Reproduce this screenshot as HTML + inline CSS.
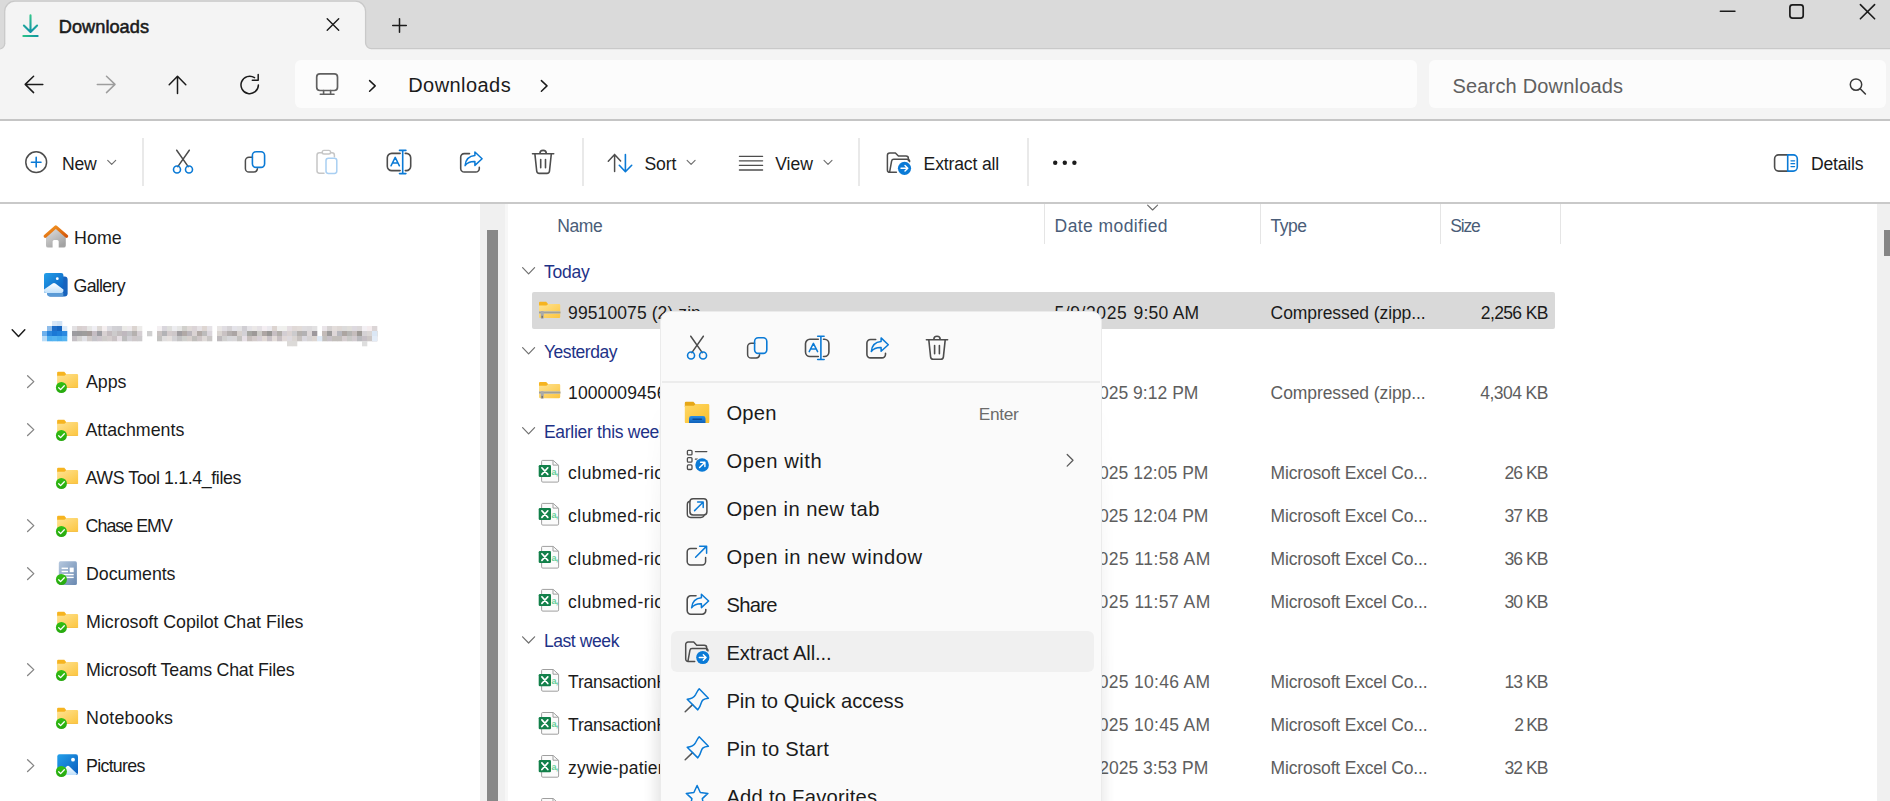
<!DOCTYPE html>
<html lang="en"><head><meta charset="utf-8"><title>Downloads - File Explorer</title>
<style>
html,body{margin:0;padding:0;}
body{width:1890px;height:801px;overflow:hidden;position:relative;background:#fff;font-family:"Liberation Sans",sans-serif;}
.a{position:absolute;}
.t{position:absolute;white-space:nowrap;font-family:"Liberation Sans",sans-serif;}
svg{position:absolute;overflow:visible;}
.ov{left:0;top:0;pointer-events:none;}
.s{fill:none;stroke-linecap:round;stroke-linejoin:round;}
</style></head><body>
<div class="a" style="left:0;top:0;width:1890px;height:48px;background:#dadada"></div>
<div class="a" style="left:0;top:48px;width:1890px;height:72px;background:#f4f4f4"></div>
<svg class="ov" width="1890" height="60" viewBox="0 0 1890 60"><path d="M-2 48.6A5.2 5.2 0 0 0 4.7 43.4V11.4A10.2 10.2 0 0 1 14.9 1.2H355.4A10.2 10.2 0 0 1 365.6 11.4V42.8A5.8 5.8 0 0 0 371.4 48.6H1892V56H-2Z" fill="#f4f4f4"/><path d="M-2 48.6A5.2 5.2 0 0 0 4.7 43.4V11.4A10.2 10.2 0 0 1 14.9 1.2H355.4A10.2 10.2 0 0 1 365.6 11.4V42.8A5.8 5.8 0 0 0 371.4 48.6H1892" fill="none" stroke="#c9c9c9" stroke-width="1.3"/></svg>
<div class="a" style="left:0;top:119px;width:1890px;height:2px;background:#c5c5c5"></div>
<div class="a" style="left:295.2px;top:60.2px;width:1121.6px;height:48.3px;background:#fcfcfc;border-radius:6px"></div>
<div class="a" style="left:1429.2px;top:60.2px;width:456.5px;height:48.3px;background:#fcfcfc;border-radius:6px"></div>
<div class="a" style="left:0;top:121px;width:1890px;height:81px;background:#fff"></div>
<div class="a" style="left:0;top:202px;width:1890px;height:2px;background:#c9c9c9"></div>
<div class="a" style="left:142px;top:138px;width:1.6px;height:48px;background:#e9e9e9"></div>
<div class="a" style="left:582px;top:138px;width:1.6px;height:48px;background:#e9e9e9"></div>
<div class="a" style="left:858px;top:138px;width:1.6px;height:48px;background:#e9e9e9"></div>
<div class="a" style="left:1027px;top:138px;width:1.6px;height:48px;background:#e9e9e9"></div>
<div class="a" style="left:480px;top:204px;width:25px;height:597px;background:#f0f0f0"></div>
<div class="a" style="left:487.1px;top:230px;width:11px;height:571px;background:#888"></div>
<div class="a" style="left:505px;top:204px;width:3px;height:597px;background:#f7f7f7"></div>
<div class="a" style="left:1877.2px;top:204px;width:13px;height:597px;background:#f0f0f0"></div>
<div class="a" style="left:1884px;top:230px;width:6px;height:26px;background:#858585"></div>
<div class="a" style="left:1044px;top:204px;width:1px;height:40px;background:#e5e5e5"></div>
<div class="a" style="left:1260px;top:204px;width:1px;height:40px;background:#e5e5e5"></div>
<div class="a" style="left:1440px;top:204px;width:1px;height:40px;background:#e5e5e5"></div>
<div class="a" style="left:1560px;top:204px;width:1px;height:40px;background:#e5e5e5"></div>
<div class="a" style="left:532px;top:292px;width:1023px;height:36.8px;background:#d9d9d9;border-radius:2px"></div>
<svg class="ov" width="1890" height="801" viewBox="0 0 1890 801"><defs><linearGradient id="dl2" x1="0" y1="0" x2="1" y2="0"><stop offset="0" stop-color="#2cc587"/><stop offset="1" stop-color="#0f93a2"/></linearGradient><linearGradient id="dl" gradientUnits="userSpaceOnUse" x1="0" y1="14" x2="0" y2="33"><stop offset="0" stop-color="#35c98a"/><stop offset="1" stop-color="#0f8fa8"/></linearGradient></defs>
<path class="s" d="M30.5 15.4V31.4M23.9 25.6L30.5 32L37.1 25.6" stroke="url(#dl)" stroke-width="2.1"/>
<rect x="22.3" y="35" width="16.4" height="2" rx="1" fill="url(#dl2)"/>
<path class="s" d="M327.2 18.8L338.7 30.3M338.7 18.8L327.2 30.3" stroke="#1b1b1b" stroke-width="1.4" fill="none" />
<path class="s" d="M392.7 25.5H406.3M399.5 18.7V32.3" stroke="#1b1b1b" stroke-width="1.5" fill="none" />
<path class="s" d="M1720.3 11.2H1735" stroke="#1b1b1b" stroke-width="1.4" fill="none" />
<rect x="1789.9" y="4.9" width="13.3" height="13.3" rx="2.6" fill="none" stroke="#1b1b1b" stroke-width="1.7"/>
<path class="s" d="M1860.4 4.6L1874.6 18.8M1874.6 4.6L1860.4 18.8" stroke="#1b1b1b" stroke-width="1.6" fill="none" />
<path class="s" d="M42.8 84.4H25.4M33.6 76.2L25.2 84.4L33.6 92.6" stroke="#1b1b1b" stroke-width="1.5" fill="none" />
<path class="s" d="M97.3 84.4H114.8M106.5 76.2L115 84.4L106.5 92.6" stroke="#9d9d9d" stroke-width="1.5" fill="none" />
<path class="s" d="M177.5 93.6V76.6M169.2 84.7L177.5 76.3L185.8 84.7" stroke="#1b1b1b" stroke-width="1.5" fill="none" />
<path class="s" d="M258.4 85A8.7 8.7 0 1 1 254.5 77.7" stroke="#1b1b1b" stroke-width="1.5" fill="none" />
<path class="s" d="M252.3 80.3H258.2V74.4" stroke="#1b1b1b" stroke-width="1.5" fill="none" />
<rect x="316.7" y="73.9" width="20.8" height="16.6" rx="3.2" fill="none" stroke="#606060" stroke-width="1.7"/>
<path class="s" d="M323.6 90.5V94M330.6 90.5V94M320.3 94.2H334" stroke="#606060" stroke-width="1.6" fill="none" />
<path class="s" d="M369.6 80.6L375.2 85.9L369.6 91.2" stroke="#1b1b1b" stroke-width="1.5" fill="none" />
<path class="s" d="M541.4 80.6L547 85.9L541.4 91.2" stroke="#1b1b1b" stroke-width="1.5" fill="none" />
<circle cx="1856" cy="84.6" r="5.7" fill="none" stroke="#3a3a3a" stroke-width="1.5"/>
<path class="s" d="M1860.2 88.8L1865.4 94" stroke="#3a3a3a" stroke-width="1.6" fill="none" />
<circle cx="36.2" cy="162.2" r="10.4" fill="none" stroke="#4d4d4d" stroke-width="1.5"/>
<path class="s" d="M31.4 162.2H41M36.2 157.4V167" stroke="#0a7ad6" stroke-width="1.6" fill="none" />
<path class="s" d="M107.7 160.3L111.7 164.3L115.7 160.3" stroke="#6c6c6c" stroke-width="1.1" fill="none" />
<path class="s" d="M687.1 160.3L691.1 164.3L695.1 160.3" stroke="#6c6c6c" stroke-width="1.1" fill="none" />
<path class="s" d="M824 160.3L828 164.3L832 160.3" stroke="#6c6c6c" stroke-width="1.1" fill="none" />
<path class="s" d="M176.7 150.2L188.2 166.6M189.3 150.2L177.8 166.6" stroke="#4d4d4d" stroke-width="1.5" fill="none" />
<circle cx="177.0" cy="169.5" r="3.5" fill="none" stroke="#0a7ad6" stroke-width="1.6"/>
<circle cx="189.0" cy="169.5" r="3.5" fill="none" stroke="#0a7ad6" stroke-width="1.6"/>
<path class="s" d="M252.4 157.2H249.0A3.6 3.6 0 0 0 245.4 160.79999999999998V168.39999999999998A3.6 3.6 0 0 0 249.0 172.0H254.0A3.6 3.6 0 0 0 257.4 168.79999999999998" stroke="#4d4d4d" stroke-width="1.5" fill="none" />
<rect x="252.4" y="151.79999999999998" width="12.2" height="15.6" rx="3.6" fill="none" stroke="#0a7ad6" stroke-width="1.6"/>
<path class="s" d="M324 173.20000000000002H319.4A2.4 2.4 0 0 1 317 170.8V155.20000000000002A2.4 2.4 0 0 1 319.4 152.8H322.4M330.6 152.8H332A2.4 2.4 0 0 1 334.4 155.20000000000002V156.8" stroke="#c6c6c6" stroke-width="1.5" fill="none" />
<rect x="322.2" y="150.4" width="8.4" height="3.6" rx="1.8" fill="none" stroke="#c6c6c6" stroke-width="1.4"/>
<rect x="326" y="158.20000000000002" width="10.8" height="15.2" rx="2.4" fill="none" stroke="#a9cff2" stroke-width="1.5"/>
<path class="s" d="M400.09999999999997 153.4H391.7A4.4 4.4 0 0 0 387.3 157.8V166.2A4.4 4.4 0 0 0 391.7 170.6H400.09999999999997M405.3 153.4H406.3A4.4 4.4 0 0 1 410.7 157.8V166.2A4.4 4.4 0 0 1 406.3 170.6H405.3" stroke="#4d4d4d" stroke-width="1.6" fill="none" />
<path class="s" d="M402.7 150.6V173.4M399.5 150.4H405.9M399.5 173.6H405.9" stroke="#0a7ad6" stroke-width="1.6" fill="none" />
<path class="s" d="M391.0 165.8L395.2 157.4L399.4 165.8M392.5 163.0H397.9" stroke="#0a7ad6" stroke-width="1.5" fill="none" />
<path class="s" d="M469.5 153.6H464.3A3.6 3.6 0 0 0 460.7 157.2V168.4A3.6 3.6 0 0 0 464.3 172.0H475.7A3.6 3.6 0 0 0 479.3 168.4V167.4" stroke="#4d4d4d" stroke-width="1.6" fill="none" />
<path class="s" d="M474.9 152.0L482.1 158.8L474.9 165.4V161.6C470.0 161.4 467.1 163.0 465.1 165.6C465.7 159.6 469.5 156.0 474.9 155.6Z" stroke="#0a7ad6" stroke-width="1.5" fill="none" />
<path class="s" d="M532.5 153.79999999999998H553.7M539.9 153.6A3.2 3.2 0 0 1 546.3000000000001 153.6M534.9 154.0L536.7 171.0A2.6 2.6 0 0 0 539.3000000000001 173.39999999999998H546.9A2.6 2.6 0 0 0 549.5 171.0L551.3000000000001 154.0M540.7 159.6V167.79999999999998M545.5 159.6V167.79999999999998" stroke="#4d4d4d" stroke-width="1.6" fill="none" />
<path class="s" d="M614.6 171.4V154.6M608.3 161.2L614.6 154.6L620.6 160.9" stroke="#4d4d4d" stroke-width="1.5" fill="none" />
<path class="s" d="M625.4 154.6V171.4M619.3 165.3L625.4 171.7L631.7 165.3" stroke="#0a7ad6" stroke-width="1.6" fill="none" />
<path class="s" d="M739.4 156.3H762.6" stroke="#4d4d4d" stroke-width="1.3" fill="none" />
<path class="s" d="M739.4 160.8H762.6" stroke="#4d4d4d" stroke-width="1.3" fill="none" />
<path class="s" d="M739.4 165.4H762.6" stroke="#4d4d4d" stroke-width="1.3" fill="none" />
<path class="s" d="M739.4 170H762.6" stroke="#4d4d4d" stroke-width="1.3" fill="none" />
<path class="s" d="M896.4 172.29999999999998H889.8A2.4 2.4 0 0 1 887.4 169.89999999999998V155.29999999999998A2.4 2.4 0 0 1 889.8 152.89999999999998H895.4L898.4 156.1H906.0A2.4 2.4 0 0 1 908.4 158.5V160.7" stroke="#4d4d4d" stroke-width="1.5" fill="none" />
<path class="s" d="M889.6 172.1L891.6 161.1A2.2 2.2 0 0 1 893.8 159.29999999999998H907.6A2.0 2.0 0 0 1 909.6 161.7" stroke="#4d4d4d" stroke-width="1.5" fill="none" />
<circle cx="904.5" cy="168.29999999999998" r="7.4" fill="#fff"/>
<circle cx="904.5" cy="168.29999999999998" r="6.6" fill="#0a7ad6"/>
<path class="s" d="M901.0 168.29999999999998H907.6M905.0 165.5L907.8 168.29999999999998L905.0 171.1" stroke="#fff" stroke-width="1.4" fill="none" />
<circle cx="1055.2" cy="162.7" r="2.2" fill="#1b1b1b"/>
<circle cx="1064.8" cy="162.7" r="2.2" fill="#1b1b1b"/>
<circle cx="1074.4" cy="162.7" r="2.2" fill="#1b1b1b"/>
<path class="s" d="M1787.7 154.9H1778.6A4 4 0 0 0 1774.6 158.9V167.1A4 4 0 0 0 1778.6 171.1H1787.7" stroke="#4d4d4d" stroke-width="1.6" fill="none" />
<path class="s" d="M1787.7 154.9H1793.3A4 4 0 0 1 1797.3 158.9V167.1A4 4 0 0 1 1793.3 171.1H1787.7Z" stroke="#0a7ad6" stroke-width="1.6" fill="none" />
<path class="s" d="M1791 160.8H1794.6" stroke="#0a7ad6" stroke-width="1.3" fill="none" />
<path class="s" d="M1791 163.7H1794.6" stroke="#0a7ad6" stroke-width="1.3" fill="none" />
<path class="s" d="M1791 166.6H1794.6" stroke="#0a7ad6" stroke-width="1.3" fill="none" />
<defs>
<linearGradient id="roof" x1="0" y1="0" x2="1" y2="1"><stop offset="0" stop-color="#f59a23"/><stop offset="1" stop-color="#d4560a"/></linearGradient>
<linearGradient id="hbody" x1="0" y1="0" x2="0.6" y2="1"><stop offset="0" stop-color="#e4e4e4"/><stop offset="1" stop-color="#a3a3a3"/></linearGradient>
<linearGradient id="gal" x1="0" y1="0" x2="1" y2="1"><stop offset="0" stop-color="#23a0ea"/><stop offset="1" stop-color="#0a5bbd"/></linearGradient>
<linearGradient id="mtn" x1="0" y1="0" x2="0" y2="1"><stop offset="0" stop-color="#ffffff"/><stop offset="1" stop-color="#bfe0fb"/></linearGradient>
<linearGradient id="fold" x1="0" y1="0" x2="1" y2="1"><stop offset="0" stop-color="#fee394"/><stop offset="1" stop-color="#fcc53e"/></linearGradient>
<linearGradient id="doc" x1="0" y1="0" x2="1" y2="1"><stop offset="0" stop-color="#b6c8de"/><stop offset="1" stop-color="#6888b0"/></linearGradient>
<linearGradient id="chk" x1="0" y1="0" x2="0" y2="1"><stop offset="0" stop-color="#33c014"/><stop offset="1" stop-color="#26a80f"/></linearGradient>
</defs>
<path d="M46 235.5L55.8 227L65.8 235.5V245.4A2.2 2.2 0 0 1 63.6 247.6H58.7V241.6A1.6 1.6 0 0 0 57.1 240H54.2A1.6 1.6 0 0 0 52.6 241.6V247.6H48.2A2.2 2.2 0 0 1 46 245.4Z" fill="url(#hbody)"/>
<path class="s" d="M45.2 236.2L55.8 226.9L66.6 236.2" stroke="url(#roof)" stroke-width="3.2"/>
<path d="M48.5 276.5H64.6A3 3 0 0 1 67.6 279.5V293.6A3 3 0 0 1 64.6 296.6H50.5A3 3 0 0 1 47.5 293.6Z" fill="#1763bd"/>
<path d="M47 293H63.3V296.6H50A3 3 0 0 1 47 293.6Z" fill="#5a9ad6"/>
<rect x="44" y="272.9" width="19.4" height="20.2" rx="2.2" fill="url(#gal)"/>
<path d="M44 289.6L52.6 283.6A2.4 2.4 0 0 1 55.4 283.6L63.4 289.6V291A2.1 2.1 0 0 1 61.3 293.1H46.1A2.1 2.1 0 0 1 44 291Z" fill="url(#mtn)"/>
<circle cx="57.3" cy="278.7" r="1.4" fill="#fff"/>
<path class="s" d="M12.2 329.8L18.5 336.4L24.8 329.8" stroke="#1b1b1b" stroke-width="1.5" fill="none" />
<path class="s" d="M27.6 375.70000000000005L33.8 381.6L27.6 387.5" stroke="#858585" stroke-width="1.3" fill="none" />
<path d="M57.1 372.9A1.1 1.1 0 0 1 58.2 371.8H64.3L66.1 373.9V376.5H57.1Z" fill="#f6b420"/>
<path d="M57.1 375.7H64.5L66.4 374.0H77.0A1.1 1.1 0 0 1 78.1 375.1V386.7A1.1 1.1 0 0 1 77.0 387.8H58.2A1.1 1.1 0 0 1 57.1 386.7Z" fill="url(#fold)"/>
<rect x="57.1" y="387.0" width="21" height="0.8" fill="#f2b530" opacity=".8"/>
<circle cx="61.4" cy="387.5" r="5.5" fill="url(#chk)"/>
<path class="s" d="M58.699999999999996 387.7L60.6 389.6L64.3 385.7" stroke="#fff" stroke-width="1.3" fill="none" />
<path class="s" d="M27.6 423.70000000000005L33.8 429.6L27.6 435.5" stroke="#858585" stroke-width="1.3" fill="none" />
<path d="M57.1 420.9A1.1 1.1 0 0 1 58.2 419.8H64.3L66.1 421.9V424.5H57.1Z" fill="#f6b420"/>
<path d="M57.1 423.7H64.5L66.4 422.0H77.0A1.1 1.1 0 0 1 78.1 423.1V434.7A1.1 1.1 0 0 1 77.0 435.8H58.2A1.1 1.1 0 0 1 57.1 434.7Z" fill="url(#fold)"/>
<rect x="57.1" y="435.0" width="21" height="0.8" fill="#f2b530" opacity=".8"/>
<circle cx="61.4" cy="435.5" r="5.5" fill="url(#chk)"/>
<path class="s" d="M58.699999999999996 435.7L60.6 437.6L64.3 433.7" stroke="#fff" stroke-width="1.3" fill="none" />
<path d="M57.1 468.9A1.1 1.1 0 0 1 58.2 467.8H64.3L66.1 469.9V472.5H57.1Z" fill="#f6b420"/>
<path d="M57.1 471.7H64.5L66.4 470.0H77.0A1.1 1.1 0 0 1 78.1 471.1V482.7A1.1 1.1 0 0 1 77.0 483.8H58.2A1.1 1.1 0 0 1 57.1 482.7Z" fill="url(#fold)"/>
<rect x="57.1" y="483.0" width="21" height="0.8" fill="#f2b530" opacity=".8"/>
<circle cx="61.4" cy="483.5" r="5.5" fill="url(#chk)"/>
<path class="s" d="M58.699999999999996 483.7L60.6 485.6L64.3 481.7" stroke="#fff" stroke-width="1.3" fill="none" />
<path class="s" d="M27.6 519.7L33.8 525.6L27.6 531.5" stroke="#858585" stroke-width="1.3" fill="none" />
<path d="M57.1 516.9A1.1 1.1 0 0 1 58.2 515.8H64.3L66.1 517.9V520.5H57.1Z" fill="#f6b420"/>
<path d="M57.1 519.7H64.5L66.4 518.0H77.0A1.1 1.1 0 0 1 78.1 519.1V530.7A1.1 1.1 0 0 1 77.0 531.8H58.2A1.1 1.1 0 0 1 57.1 530.7Z" fill="url(#fold)"/>
<rect x="57.1" y="531.0" width="21" height="0.8" fill="#f2b530" opacity=".8"/>
<circle cx="61.4" cy="531.5" r="5.5" fill="url(#chk)"/>
<path class="s" d="M58.699999999999996 531.7L60.6 533.6L64.3 529.7" stroke="#fff" stroke-width="1.3" fill="none" />
<path class="s" d="M27.6 567.7L33.8 573.6L27.6 579.5" stroke="#858585" stroke-width="1.3" fill="none" />
<rect x="58.8" y="561.3" width="18.1" height="23.7" rx="1.6" fill="url(#doc)"/>
<rect x="61.6" y="567.6" width="6.4" height="1.5" fill="#fff"/><rect x="61.6" y="570.8" width="6.4" height="1.4" fill="#fff"/>
<rect x="69.7" y="567.6" width="4" height="4.6" fill="#fff"/>
<rect x="61.6" y="573.9" width="12.1" height="1.4" fill="#fff"/><rect x="61.6" y="576.7" width="12.1" height="1.4" fill="#fff"/>
<circle cx="61.4" cy="579.5" r="5.5" fill="url(#chk)"/>
<path class="s" d="M58.699999999999996 579.7L60.6 581.6L64.3 577.7" stroke="#fff" stroke-width="1.3" fill="none" />
<path d="M57.1 612.9A1.1 1.1 0 0 1 58.2 611.8H64.3L66.1 613.9V616.5H57.1Z" fill="#f6b420"/>
<path d="M57.1 615.7H64.5L66.4 614.0H77.0A1.1 1.1 0 0 1 78.1 615.1V626.7A1.1 1.1 0 0 1 77.0 627.8H58.2A1.1 1.1 0 0 1 57.1 626.7Z" fill="url(#fold)"/>
<rect x="57.1" y="627.0" width="21" height="0.8" fill="#f2b530" opacity=".8"/>
<circle cx="61.4" cy="627.5" r="5.5" fill="url(#chk)"/>
<path class="s" d="M58.699999999999996 627.7L60.6 629.6L64.3 625.7" stroke="#fff" stroke-width="1.3" fill="none" />
<path class="s" d="M27.6 663.7L33.8 669.6L27.6 675.5" stroke="#858585" stroke-width="1.3" fill="none" />
<path d="M57.1 660.9A1.1 1.1 0 0 1 58.2 659.8H64.3L66.1 661.9V664.5H57.1Z" fill="#f6b420"/>
<path d="M57.1 663.7H64.5L66.4 662.0H77.0A1.1 1.1 0 0 1 78.1 663.1V674.7A1.1 1.1 0 0 1 77.0 675.8H58.2A1.1 1.1 0 0 1 57.1 674.7Z" fill="url(#fold)"/>
<rect x="57.1" y="675.0" width="21" height="0.8" fill="#f2b530" opacity=".8"/>
<circle cx="61.4" cy="675.5" r="5.5" fill="url(#chk)"/>
<path class="s" d="M58.699999999999996 675.7L60.6 677.6L64.3 673.7" stroke="#fff" stroke-width="1.3" fill="none" />
<path d="M57.1 708.9A1.1 1.1 0 0 1 58.2 707.8H64.3L66.1 709.9V712.5H57.1Z" fill="#f6b420"/>
<path d="M57.1 711.7H64.5L66.4 710.0H77.0A1.1 1.1 0 0 1 78.1 711.1V722.7A1.1 1.1 0 0 1 77.0 723.8H58.2A1.1 1.1 0 0 1 57.1 722.7Z" fill="url(#fold)"/>
<rect x="57.1" y="723.0" width="21" height="0.8" fill="#f2b530" opacity=".8"/>
<circle cx="61.4" cy="723.5" r="5.5" fill="url(#chk)"/>
<path class="s" d="M58.699999999999996 723.7L60.6 725.6L64.3 721.7" stroke="#fff" stroke-width="1.3" fill="none" />
<path class="s" d="M27.6 759.7L33.8 765.6L27.6 771.5" stroke="#858585" stroke-width="1.3" fill="none" />
<rect x="57.3" y="754.3" width="20.7" height="20.7" rx="2.2" fill="url(#gal)"/>
<path d="M59.6 774.1L66.6 766.5A2 2 0 0 1 69.4 766.4L77 773.7Q76.6 774.9 75.6 775.0H59.6Z" fill="url(#mtn)"/>
<circle cx="73" cy="759.7" r="1.9" fill="#fff"/>
<circle cx="61.4" cy="771.5" r="5.5" fill="url(#chk)"/>
<path class="s" d="M58.699999999999996 771.7L60.6 773.6L64.3 769.7" stroke="#fff" stroke-width="1.3" fill="none" />
<rect x="52" y="321" width="5.3" height="5.3" fill="#d8e7f7"/>
<rect x="57" y="321" width="5.3" height="5.3" fill="#cfe2f5"/>
<rect x="47" y="326" width="5.3" height="5.3" fill="#8fbdea"/>
<rect x="52" y="326" width="5.3" height="5.3" fill="#1f6fc9"/>
<rect x="57" y="326" width="5.3" height="5.3" fill="#1565c0"/>
<rect x="62" y="326" width="5.3" height="5.3" fill="#dcebf9"/>
<rect x="42" y="331" width="5.3" height="5.3" fill="#6fb1ec"/>
<rect x="47" y="331" width="5.3" height="5.3" fill="#2a86dd"/>
<rect x="52" y="331" width="5.3" height="5.3" fill="#1a78d6"/>
<rect x="57" y="331" width="5.3" height="5.3" fill="#1f7fda"/>
<rect x="62" y="331" width="5.3" height="5.3" fill="#2b8ae0"/>
<rect x="42" y="336" width="5.3" height="5.3" fill="#b9dcf8"/>
<rect x="47" y="336" width="5.3" height="5.3" fill="#4fb0f0"/>
<rect x="52" y="336" width="5.3" height="5.3" fill="#55b4f1"/>
<rect x="57" y="336" width="5.3" height="5.3" fill="#4aaeef"/>
<rect x="62" y="336" width="5.3" height="5.3" fill="#57b5f1"/>
<rect x="72" y="326" width="5.3" height="5.3" fill="#e3e1e3"/>
<rect x="72" y="331" width="5.3" height="5.3" fill="#9d9ca0"/>
<rect x="72" y="336" width="5.3" height="5.3" fill="#c4bfc4"/>
<rect x="77" y="326" width="5.3" height="5.3" fill="#d8d0cf"/>
<rect x="77" y="331" width="5.3" height="5.3" fill="#9b9a9c"/>
<rect x="77" y="336" width="5.3" height="5.3" fill="#d4d3d2"/>
<rect x="82" y="326" width="5.3" height="5.3" fill="#dad2d4"/>
<rect x="82" y="331" width="5.3" height="5.3" fill="#9e9d9c"/>
<rect x="82" y="336" width="5.3" height="5.3" fill="#e1e1e6"/>
<rect x="87" y="326" width="5.3" height="5.3" fill="#e6e6e5"/>
<rect x="87" y="331" width="5.3" height="5.3" fill="#a39b99"/>
<rect x="87" y="336" width="5.3" height="5.3" fill="#d1cbc9"/>
<rect x="92" y="326" width="5.3" height="5.3" fill="#f0eff4"/>
<rect x="92" y="331" width="5.3" height="5.3" fill="#c5bdc3"/>
<rect x="92" y="336" width="5.3" height="5.3" fill="#c5c4c9"/>
<rect x="97" y="326" width="5.3" height="5.3" fill="#ded9d6"/>
<rect x="97" y="331" width="5.3" height="5.3" fill="#9e9ea3"/>
<rect x="97" y="336" width="5.3" height="5.3" fill="#cdc6cc"/>
<rect x="102" y="326" width="5.3" height="5.3" fill="#f5eff0"/>
<rect x="102" y="331" width="5.3" height="5.3" fill="#d8d1d2"/>
<rect x="102" y="336" width="5.3" height="5.3" fill="#cfccca"/>
<rect x="107" y="326" width="5.3" height="5.3" fill="#dddce1"/>
<rect x="107" y="331" width="5.3" height="5.3" fill="#c4bcbf"/>
<rect x="107" y="336" width="5.3" height="5.3" fill="#d5cece"/>
<rect x="112" y="326" width="5.3" height="5.3" fill="#d2d1d5"/>
<rect x="112" y="331" width="5.3" height="5.3" fill="#cdcbcc"/>
<rect x="112" y="336" width="5.3" height="5.3" fill="#c9c2c4"/>
<rect x="117" y="326" width="5.3" height="5.3" fill="#d0cfd3"/>
<rect x="117" y="331" width="5.3" height="5.3" fill="#c3bebf"/>
<rect x="117" y="336" width="5.3" height="5.3" fill="#e6dfe4"/>
<rect x="122" y="326" width="5.3" height="5.3" fill="#ebeae7"/>
<rect x="122" y="331" width="5.3" height="5.3" fill="#bfb8be"/>
<rect x="122" y="336" width="5.3" height="5.3" fill="#bdbdbd"/>
<rect x="127" y="326" width="5.3" height="5.3" fill="#ede9eb"/>
<rect x="127" y="331" width="5.3" height="5.3" fill="#c2c2c5"/>
<rect x="127" y="336" width="5.3" height="5.3" fill="#d1cfd4"/>
<rect x="132" y="326" width="5.3" height="5.3" fill="#dbd4d0"/>
<rect x="132" y="331" width="5.3" height="5.3" fill="#b5b1af"/>
<rect x="132" y="336" width="5.3" height="5.3" fill="#cec8ca"/>
<rect x="137" y="326" width="5.3" height="5.3" fill="#edecea"/>
<rect x="137" y="331" width="5.3" height="5.3" fill="#d5cfd3"/>
<rect x="137" y="336" width="5.3" height="5.3" fill="#cccacc"/>
<rect x="157" y="326" width="5.3" height="5.3" fill="#f4f0f2"/>
<rect x="157" y="331" width="5.3" height="5.3" fill="#c9c3c2"/>
<rect x="157" y="336" width="5.3" height="5.3" fill="#c3c2c0"/>
<rect x="162" y="326" width="5.3" height="5.3" fill="#d9d6dc"/>
<rect x="162" y="331" width="5.3" height="5.3" fill="#b3b3b6"/>
<rect x="162" y="336" width="5.3" height="5.3" fill="#e0dede"/>
<rect x="167" y="326" width="5.3" height="5.3" fill="#dfdfdd"/>
<rect x="167" y="331" width="5.3" height="5.3" fill="#d3cbcc"/>
<rect x="167" y="336" width="5.3" height="5.3" fill="#e5e0de"/>
<rect x="172" y="326" width="5.3" height="5.3" fill="#ededf0"/>
<rect x="172" y="331" width="5.3" height="5.3" fill="#cec8ca"/>
<rect x="172" y="336" width="5.3" height="5.3" fill="#d3d2d5"/>
<rect x="177" y="326" width="5.3" height="5.3" fill="#e6e6e5"/>
<rect x="177" y="331" width="5.3" height="5.3" fill="#a19ea1"/>
<rect x="177" y="336" width="5.3" height="5.3" fill="#c4c3c4"/>
<rect x="182" y="326" width="5.3" height="5.3" fill="#d1d0cc"/>
<rect x="182" y="331" width="5.3" height="5.3" fill="#b1a9a6"/>
<rect x="182" y="336" width="5.3" height="5.3" fill="#d0d0cd"/>
<rect x="187" y="326" width="5.3" height="5.3" fill="#e0dad8"/>
<rect x="187" y="331" width="5.3" height="5.3" fill="#bbb6bb"/>
<rect x="187" y="336" width="5.3" height="5.3" fill="#d7d0cd"/>
<rect x="192" y="326" width="5.3" height="5.3" fill="#dbd4d7"/>
<rect x="192" y="331" width="5.3" height="5.3" fill="#dad3d3"/>
<rect x="192" y="336" width="5.3" height="5.3" fill="#c0bebb"/>
<rect x="197" y="326" width="5.3" height="5.3" fill="#e6e2e5"/>
<rect x="197" y="331" width="5.3" height="5.3" fill="#b2aaa6"/>
<rect x="197" y="336" width="5.3" height="5.3" fill="#cec6c7"/>
<rect x="202" y="326" width="5.3" height="5.3" fill="#ded6d2"/>
<rect x="202" y="331" width="5.3" height="5.3" fill="#bdbcbc"/>
<rect x="202" y="336" width="5.3" height="5.3" fill="#dfdad8"/>
<rect x="207" y="326" width="5.3" height="5.3" fill="#e6e3e7"/>
<rect x="207" y="331" width="5.3" height="5.3" fill="#dbd6dc"/>
<rect x="207" y="336" width="5.3" height="5.3" fill="#cac7c6"/>
<rect x="217" y="326" width="5.3" height="5.3" fill="#e9e6e5"/>
<rect x="217" y="331" width="5.3" height="5.3" fill="#dad5d1"/>
<rect x="217" y="336" width="5.3" height="5.3" fill="#bebabd"/>
<rect x="222" y="326" width="5.3" height="5.3" fill="#e0dde2"/>
<rect x="222" y="331" width="5.3" height="5.3" fill="#c9c2c3"/>
<rect x="222" y="336" width="5.3" height="5.3" fill="#d1d0cf"/>
<rect x="227" y="326" width="5.3" height="5.3" fill="#d6d3d6"/>
<rect x="227" y="331" width="5.3" height="5.3" fill="#b4afae"/>
<rect x="227" y="336" width="5.3" height="5.3" fill="#d7d7da"/>
<rect x="232" y="326" width="5.3" height="5.3" fill="#e4e3e9"/>
<rect x="232" y="331" width="5.3" height="5.3" fill="#aba5a4"/>
<rect x="232" y="336" width="5.3" height="5.3" fill="#d9d7d9"/>
<rect x="237" y="326" width="5.3" height="5.3" fill="#e3e2e4"/>
<rect x="237" y="331" width="5.3" height="5.3" fill="#d7d1ce"/>
<rect x="237" y="336" width="5.3" height="5.3" fill="#c5c3c1"/>
<rect x="242" y="326" width="5.3" height="5.3" fill="#d0ced3"/>
<rect x="242" y="331" width="5.3" height="5.3" fill="#d3d1d6"/>
<rect x="242" y="336" width="5.3" height="5.3" fill="#e6dfe5"/>
<rect x="247" y="326" width="5.3" height="5.3" fill="#e5e3e7"/>
<rect x="247" y="331" width="5.3" height="5.3" fill="#a6a6a2"/>
<rect x="247" y="336" width="5.3" height="5.3" fill="#c7bfbd"/>
<rect x="252" y="326" width="5.3" height="5.3" fill="#ebe8e7"/>
<rect x="252" y="331" width="5.3" height="5.3" fill="#9d9998"/>
<rect x="252" y="336" width="5.3" height="5.3" fill="#d3cbca"/>
<rect x="257" y="326" width="5.3" height="5.3" fill="#e5e1e5"/>
<rect x="257" y="331" width="5.3" height="5.3" fill="#cdcbc7"/>
<rect x="257" y="336" width="5.3" height="5.3" fill="#d6cfd5"/>
<rect x="262" y="326" width="5.3" height="5.3" fill="#f4eef2"/>
<rect x="262" y="331" width="5.3" height="5.3" fill="#aea6a4"/>
<rect x="262" y="336" width="5.3" height="5.3" fill="#e2dad6"/>
<rect x="267" y="326" width="5.3" height="5.3" fill="#ebe9ee"/>
<rect x="267" y="331" width="5.3" height="5.3" fill="#989694"/>
<rect x="267" y="336" width="5.3" height="5.3" fill="#c9c2c7"/>
<rect x="272" y="326" width="5.3" height="5.3" fill="#dcd4d0"/>
<rect x="272" y="331" width="5.3" height="5.3" fill="#c7bfc3"/>
<rect x="272" y="336" width="5.3" height="5.3" fill="#e3dcd9"/>
<rect x="277" y="326" width="5.3" height="5.3" fill="#f0f0ef"/>
<rect x="277" y="331" width="5.3" height="5.3" fill="#b2aeaa"/>
<rect x="277" y="336" width="5.3" height="5.3" fill="#c7bfc2"/>
<rect x="282" y="326" width="5.3" height="5.3" fill="#f0f0ed"/>
<rect x="282" y="331" width="5.3" height="5.3" fill="#d3ced3"/>
<rect x="282" y="336" width="5.3" height="5.3" fill="#e1d9d8"/>
<rect x="287" y="326" width="5.3" height="5.3" fill="#e5dee2"/>
<rect x="287" y="331" width="5.3" height="5.3" fill="#dbd3d2"/>
<rect x="287" y="336" width="5.3" height="5.3" fill="#dedade"/>
<rect x="292" y="326" width="5.3" height="5.3" fill="#e0d9d7"/>
<rect x="292" y="331" width="5.3" height="5.3" fill="#cccbcd"/>
<rect x="292" y="336" width="5.3" height="5.3" fill="#dad5d2"/>
<rect x="297" y="326" width="5.3" height="5.3" fill="#e2dcd9"/>
<rect x="297" y="331" width="5.3" height="5.3" fill="#b5b1ae"/>
<rect x="297" y="336" width="5.3" height="5.3" fill="#c7c2c0"/>
<rect x="302" y="326" width="5.3" height="5.3" fill="#dfdde0"/>
<rect x="302" y="331" width="5.3" height="5.3" fill="#b3b2b4"/>
<rect x="302" y="336" width="5.3" height="5.3" fill="#dad8de"/>
<rect x="307" y="326" width="5.3" height="5.3" fill="#dddbdd"/>
<rect x="307" y="331" width="5.3" height="5.3" fill="#ddd7d8"/>
<rect x="307" y="336" width="5.3" height="5.3" fill="#d6d3d4"/>
<rect x="312" y="326" width="5.3" height="5.3" fill="#e2e1e2"/>
<rect x="312" y="331" width="5.3" height="5.3" fill="#9d989c"/>
<rect x="312" y="336" width="5.3" height="5.3" fill="#ddd6d2"/>
<rect x="322" y="326" width="5.3" height="5.3" fill="#eae5e9"/>
<rect x="322" y="331" width="5.3" height="5.3" fill="#c3bbb8"/>
<rect x="322" y="336" width="5.3" height="5.3" fill="#c3c0bd"/>
<rect x="327" y="326" width="5.3" height="5.3" fill="#d6d2d2"/>
<rect x="327" y="331" width="5.3" height="5.3" fill="#9d9b9b"/>
<rect x="327" y="336" width="5.3" height="5.3" fill="#c7c1c7"/>
<rect x="332" y="326" width="5.3" height="5.3" fill="#e3dddb"/>
<rect x="332" y="331" width="5.3" height="5.3" fill="#ded7d8"/>
<rect x="332" y="336" width="5.3" height="5.3" fill="#c2beba"/>
<rect x="337" y="326" width="5.3" height="5.3" fill="#ded8d5"/>
<rect x="337" y="331" width="5.3" height="5.3" fill="#b8b8be"/>
<rect x="337" y="336" width="5.3" height="5.3" fill="#c2bebb"/>
<rect x="342" y="326" width="5.3" height="5.3" fill="#dcdbdb"/>
<rect x="342" y="331" width="5.3" height="5.3" fill="#aca5a1"/>
<rect x="342" y="336" width="5.3" height="5.3" fill="#d6ced0"/>
<rect x="347" y="326" width="5.3" height="5.3" fill="#e0deda"/>
<rect x="347" y="331" width="5.3" height="5.3" fill="#b5b4b2"/>
<rect x="347" y="336" width="5.3" height="5.3" fill="#c9c9c7"/>
<rect x="352" y="326" width="5.3" height="5.3" fill="#ddd9df"/>
<rect x="352" y="331" width="5.3" height="5.3" fill="#c5bdbc"/>
<rect x="352" y="336" width="5.3" height="5.3" fill="#d2cbcf"/>
<rect x="357" y="326" width="5.3" height="5.3" fill="#dcd8d9"/>
<rect x="357" y="331" width="5.3" height="5.3" fill="#9c9894"/>
<rect x="357" y="336" width="5.3" height="5.3" fill="#b9b9bd"/>
<rect x="362" y="326" width="5.3" height="5.3" fill="#f3f0f4"/>
<rect x="362" y="331" width="5.3" height="5.3" fill="#d5d2d5"/>
<rect x="362" y="336" width="5.3" height="5.3" fill="#c5bfc5"/>
<rect x="367" y="326" width="5.3" height="5.3" fill="#f4ecee"/>
<rect x="367" y="331" width="5.3" height="5.3" fill="#dad6d5"/>
<rect x="367" y="336" width="5.3" height="5.3" fill="#ccc7c6"/>
<rect x="372" y="326" width="5.3" height="5.3" fill="#dbd5d6"/>
<rect x="372" y="331" width="5.3" height="5.3" fill="#9e9c98"/>
<rect x="372" y="336" width="5.3" height="5.3" fill="#c1bdbf"/>
<rect x="147" y="331" width="5.3" height="5.3" fill="#d0d0d0"/>
<rect x="287" y="341" width="5.3" height="5.3" fill="#dcdad8"/>
<rect x="292" y="341" width="5.3" height="5.3" fill="#dcdad8"/>
<rect x="362" y="341" width="5.3" height="5.3" fill="#dedede"/>
<rect x="317" y="336" width="5.3" height="5.3" fill="#dfe9f5"/>
<rect x="372" y="331" width="5.3" height="5.3" fill="#dbe7f5"/>
<rect x="372" y="336" width="5.3" height="5.3" fill="#e3ecf7"/>
<path class="s" d="M1147.6 205.2L1152.6 210L1157.6 205.2" stroke="#6a6a6a" stroke-width="1.1" fill="none" />
<path class="s" d="M522.6 267.7L528.6 273.90000000000003L534.6 267.7" stroke="#707070" stroke-width="1.2" fill="none" />
<path class="s" d="M522.6 347.59999999999997L528.6 353.8L534.6 347.59999999999997" stroke="#707070" stroke-width="1.2" fill="none" />
<path class="s" d="M522.6 427.7L528.6 433.90000000000003L534.6 427.7" stroke="#707070" stroke-width="1.2" fill="none" />
<path class="s" d="M522.6 636.8L528.6 643.0L534.6 636.8" stroke="#707070" stroke-width="1.2" fill="none" />
<path d="M539 302.9A1.1 1.1 0 0 1 540.1 301.79999999999995H546.2L548 303.9V306.4H539Z" fill="#f6b420"/>
<path d="M539 305.59999999999997H546.4L548.3 303.9H559.1A1.1 1.1 0 0 1 560.2 305.0V317.0A1.1 1.1 0 0 1 559.1 318.09999999999997H540.1A1.1 1.1 0 0 1 539 317.0Z" fill="url(#fold)"/>
<rect x="539" y="311.09999999999997" width="21.4" height="2.7" fill="#b9b7ac"/>
<rect x="539" y="312.09999999999997" width="21.4" height="0.8" fill="#8f8e86" opacity=".7"/>
<rect x="540.8" y="311.09999999999997" width="2.9" height="7.6" rx="0.8" fill="#a9a9a9"/>
<rect x="541.5" y="315.79999999999995" width="1.5" height="2" fill="#7c7462"/>
<path d="M539 383.0A1.1 1.1 0 0 1 540.1 381.9H546.2L548 384.0V386.5H539Z" fill="#f6b420"/>
<path d="M539 385.7H546.4L548.3 384.0H559.1A1.1 1.1 0 0 1 560.2 385.1V397.1A1.1 1.1 0 0 1 559.1 398.2H540.1A1.1 1.1 0 0 1 539 397.1Z" fill="url(#fold)"/>
<rect x="539" y="391.2" width="21.4" height="2.7" fill="#b9b7ac"/>
<rect x="539" y="392.2" width="21.4" height="0.8" fill="#8f8e86" opacity=".7"/>
<rect x="540.8" y="391.2" width="2.9" height="7.6" rx="0.8" fill="#a9a9a9"/>
<rect x="541.5" y="395.9" width="1.5" height="2" fill="#7c7462"/>
<path d="M542.6 460.4H553.2L558.6 465.29999999999995V480.9A1.2 1.2 0 0 1 557.4 482.09999999999997H542.8A1.2 1.2 0 0 1 541.6 480.9V461.4A1 1 0 0 1 542.6 460.4Z" fill="#fbfbfb" stroke="#9f9f9f" stroke-width="1"/>
<path d="M553 460.59999999999997V465.09999999999997H558.4" fill="none" stroke="#9f9f9f" stroke-width="1"/>
<rect x="538.7" y="464.9" width="12.3" height="12.2" rx="1.3" fill="#12804a"/>
<path class="s" d="M541.9 467.79999999999995L547.8 474.4M547.8 467.79999999999995L541.9 474.4" stroke="#fff" stroke-width="1.7" fill="none" />
<text x="551.4" y="474.5" font-family="Liberation Sans, sans-serif" font-size="9" font-weight="700" letter-spacing="-0.6" fill="#66cf9a">a,</text>
<path d="M542.6 503.4H553.2L558.6 508.29999999999995V523.9A1.2 1.2 0 0 1 557.4 525.1H542.8A1.2 1.2 0 0 1 541.6 523.9V504.4A1 1 0 0 1 542.6 503.4Z" fill="#fbfbfb" stroke="#9f9f9f" stroke-width="1"/>
<path d="M553 503.59999999999997V508.09999999999997H558.4" fill="none" stroke="#9f9f9f" stroke-width="1"/>
<rect x="538.7" y="507.9" width="12.3" height="12.2" rx="1.3" fill="#12804a"/>
<path class="s" d="M541.9 510.79999999999995L547.8 517.4M547.8 510.79999999999995L541.9 517.4" stroke="#fff" stroke-width="1.7" fill="none" />
<text x="551.4" y="517.5" font-family="Liberation Sans, sans-serif" font-size="9" font-weight="700" letter-spacing="-0.6" fill="#66cf9a">a,</text>
<path d="M542.6 546.4H553.2L558.6 551.3V566.9A1.2 1.2 0 0 1 557.4 568.1H542.8A1.2 1.2 0 0 1 541.6 566.9V547.4A1 1 0 0 1 542.6 546.4Z" fill="#fbfbfb" stroke="#9f9f9f" stroke-width="1"/>
<path d="M553 546.6V551.1H558.4" fill="none" stroke="#9f9f9f" stroke-width="1"/>
<rect x="538.7" y="550.9" width="12.3" height="12.2" rx="1.3" fill="#12804a"/>
<path class="s" d="M541.9 553.8L547.8 560.4M547.8 553.8L541.9 560.4" stroke="#fff" stroke-width="1.7" fill="none" />
<text x="551.4" y="560.5" font-family="Liberation Sans, sans-serif" font-size="9" font-weight="700" letter-spacing="-0.6" fill="#66cf9a">a,</text>
<path d="M542.6 589.4H553.2L558.6 594.3V609.9A1.2 1.2 0 0 1 557.4 611.1H542.8A1.2 1.2 0 0 1 541.6 609.9V590.4A1 1 0 0 1 542.6 589.4Z" fill="#fbfbfb" stroke="#9f9f9f" stroke-width="1"/>
<path d="M553 589.6V594.1H558.4" fill="none" stroke="#9f9f9f" stroke-width="1"/>
<rect x="538.7" y="593.9" width="12.3" height="12.2" rx="1.3" fill="#12804a"/>
<path class="s" d="M541.9 596.8L547.8 603.4M547.8 596.8L541.9 603.4" stroke="#fff" stroke-width="1.7" fill="none" />
<text x="551.4" y="603.5" font-family="Liberation Sans, sans-serif" font-size="9" font-weight="700" letter-spacing="-0.6" fill="#66cf9a">a,</text>
<path d="M542.6 669.5H553.2L558.6 674.4V690.0A1.2 1.2 0 0 1 557.4 691.2H542.8A1.2 1.2 0 0 1 541.6 690.0V670.5A1 1 0 0 1 542.6 669.5Z" fill="#fbfbfb" stroke="#9f9f9f" stroke-width="1"/>
<path d="M553 669.7V674.2H558.4" fill="none" stroke="#9f9f9f" stroke-width="1"/>
<rect x="538.7" y="674.0" width="12.3" height="12.2" rx="1.3" fill="#12804a"/>
<path class="s" d="M541.9 676.9L547.8 683.5M547.8 676.9L541.9 683.5" stroke="#fff" stroke-width="1.7" fill="none" />
<text x="551.4" y="683.6" font-family="Liberation Sans, sans-serif" font-size="9" font-weight="700" letter-spacing="-0.6" fill="#66cf9a">a,</text>
<path d="M542.6 712.5H553.2L558.6 717.4V733.0A1.2 1.2 0 0 1 557.4 734.2H542.8A1.2 1.2 0 0 1 541.6 733.0V713.5A1 1 0 0 1 542.6 712.5Z" fill="#fbfbfb" stroke="#9f9f9f" stroke-width="1"/>
<path d="M553 712.7V717.2H558.4" fill="none" stroke="#9f9f9f" stroke-width="1"/>
<rect x="538.7" y="717.0" width="12.3" height="12.2" rx="1.3" fill="#12804a"/>
<path class="s" d="M541.9 719.9L547.8 726.5M547.8 719.9L541.9 726.5" stroke="#fff" stroke-width="1.7" fill="none" />
<text x="551.4" y="726.6" font-family="Liberation Sans, sans-serif" font-size="9" font-weight="700" letter-spacing="-0.6" fill="#66cf9a">a,</text>
<path d="M542.6 755.5H553.2L558.6 760.4V776.0A1.2 1.2 0 0 1 557.4 777.2H542.8A1.2 1.2 0 0 1 541.6 776.0V756.5A1 1 0 0 1 542.6 755.5Z" fill="#fbfbfb" stroke="#9f9f9f" stroke-width="1"/>
<path d="M553 755.7V760.2H558.4" fill="none" stroke="#9f9f9f" stroke-width="1"/>
<rect x="538.7" y="760.0" width="12.3" height="12.2" rx="1.3" fill="#12804a"/>
<path class="s" d="M541.9 762.9L547.8 769.5M547.8 762.9L541.9 769.5" stroke="#fff" stroke-width="1.7" fill="none" />
<text x="551.4" y="769.6" font-family="Liberation Sans, sans-serif" font-size="9" font-weight="700" letter-spacing="-0.6" fill="#66cf9a">a,</text>
<path d="M542.6 798.5H553.2L558.6 803.4V819.0A1.2 1.2 0 0 1 557.4 820.2H542.8A1.2 1.2 0 0 1 541.6 819.0V799.5A1 1 0 0 1 542.6 798.5Z" fill="#fbfbfb" stroke="#9f9f9f" stroke-width="1"/>
<path d="M553 798.7V803.2H558.4" fill="none" stroke="#9f9f9f" stroke-width="1"/>
<rect x="538.7" y="803.0" width="12.3" height="12.2" rx="1.3" fill="#12804a"/>
<path class="s" d="M541.9 805.9L547.8 812.5M547.8 805.9L541.9 812.5" stroke="#fff" stroke-width="1.7" fill="none" />
<text x="551.4" y="812.6" font-family="Liberation Sans, sans-serif" font-size="9" font-weight="700" letter-spacing="-0.6" fill="#66cf9a">a,</text></svg>
<span class="t" style="left:58.8px;top:15.1px;font-size:18.2px;line-height:25px;color:#1b1b1b;-webkit-text-stroke:0.55px #1b1b1b;letter-spacing:0.027px;">Downloads</span>
<span class="t" style="left:408.2px;top:71.1px;font-size:20px;line-height:28px;color:#1b1b1b;letter-spacing:0.443px;">Downloads</span>
<span class="t" style="left:1452.4px;top:72.3px;font-size:20px;line-height:28px;color:#606060;letter-spacing:0.188px;">Search Downloads</span>
<span class="t" style="left:61.9px;top:151.5px;font-size:17.6px;line-height:25px;color:#1b1b1b;letter-spacing:-0.202px;">New</span>
<span class="t" style="left:644.5px;top:151.5px;font-size:17.6px;line-height:25px;color:#1b1b1b;letter-spacing:-0.127px;">Sort</span>
<span class="t" style="left:775.2px;top:151.5px;font-size:17.6px;line-height:25px;color:#1b1b1b;letter-spacing:-0.009px;">View</span>
<span class="t" style="left:923.6px;top:151.5px;font-size:17.6px;line-height:25px;color:#1b1b1b;letter-spacing:-0.165px;">Extract all</span>
<span class="t" style="left:1811.0px;top:151.5px;font-size:17.6px;line-height:25px;color:#1b1b1b;letter-spacing:-0.214px;">Details</span>
<span class="t" style="left:74.0px;top:226.3px;font-size:17.8px;line-height:25px;color:#1b1b1b;letter-spacing:0.088px;">Home</span>
<span class="t" style="left:73.5px;top:274.3px;font-size:17.8px;line-height:25px;color:#1b1b1b;letter-spacing:-0.688px;">Gallery</span>
<span class="t" style="left:85.9px;top:370.3px;font-size:17.8px;line-height:25px;color:#1b1b1b;letter-spacing:0.023px;">Apps</span>
<span class="t" style="left:85.4px;top:418.3px;font-size:17.8px;line-height:25px;color:#1b1b1b;letter-spacing:0.006px;">Attachments</span>
<span class="t" style="left:85.4px;top:466.3px;font-size:17.8px;line-height:25px;color:#1b1b1b;letter-spacing:-0.373px;">AWS Tool 1.1.4_files</span>
<span class="t" style="left:85.6px;top:514.3px;font-size:17.8px;line-height:25px;color:#1b1b1b;letter-spacing:-0.959px;">Chase EMV</span>
<span class="t" style="left:86.1px;top:562.3px;font-size:17.8px;line-height:25px;color:#1b1b1b;letter-spacing:-0.067px;">Documents</span>
<span class="t" style="left:86.1px;top:610.3px;font-size:17.8px;line-height:25px;color:#1b1b1b;">Microsoft Copilot Chat Files</span>
<span class="t" style="left:86.1px;top:658.3px;font-size:17.8px;line-height:25px;color:#1b1b1b;letter-spacing:-0.224px;">Microsoft Teams Chat Files</span>
<span class="t" style="left:86.1px;top:706.3px;font-size:17.8px;line-height:25px;color:#1b1b1b;letter-spacing:0.236px;">Notebooks</span>
<span class="t" style="left:86.1px;top:754.3px;font-size:17.8px;line-height:25px;color:#1b1b1b;letter-spacing:-0.719px;">Pictures</span>
<span class="t" style="left:557.2px;top:214.0px;font-size:17.5px;line-height:24px;color:#4a5d78;letter-spacing:-0.396px;">Name</span>
<span class="t" style="left:1054.6px;top:214.0px;font-size:17.5px;line-height:24px;color:#4a5d78;letter-spacing:0.418px;">Date modified</span>
<span class="t" style="left:1270.5px;top:214.0px;font-size:17.5px;line-height:24px;color:#4a5d78;letter-spacing:-0.484px;">Type</span>
<span class="t" style="left:1450.3px;top:214.0px;font-size:17.5px;line-height:24px;color:#4a5d78;letter-spacing:-1.182px;">Size</span>
<span class="t" style="left:543.9px;top:259.8px;font-size:17.5px;line-height:24px;color:#1e3287;letter-spacing:-0.226px;">Today</span>
<span class="t" style="left:543.9px;top:339.7px;font-size:17.5px;line-height:24px;color:#1e3287;letter-spacing:-0.436px;">Yesterday</span>
<span class="t" style="left:543.9px;top:419.8px;font-size:17.5px;line-height:24px;color:#1e3287;letter-spacing:-0.278px;">Earlier this week</span>
<span class="t" style="left:543.9px;top:628.9px;font-size:17.5px;line-height:24px;color:#1e3287;letter-spacing:-0.412px;">Last week</span>
<span class="t" style="left:568.1px;top:300.9px;font-size:17.5px;line-height:24px;color:#1b1b1b;letter-spacing:0.094px;">99510075 (2).zip</span>
<span class="t" style="left:1054.4px;top:300.9px;font-size:17.5px;line-height:24px;color:#1b1b1b;letter-spacing:0.611px;">5/9/2025</span>
<span class="t" style="left:1133.4px;top:300.9px;font-size:17.5px;line-height:24px;color:#1b1b1b;letter-spacing:0.264px;">9:50 AM</span>
<span class="t" style="left:1270.6px;top:300.9px;font-size:17.5px;line-height:24px;color:#1b1b1b;letter-spacing:-0.083px;">Compressed (zipp...</span>
<span class="t" style="left:1480.8px;top:300.9px;font-size:17.5px;line-height:24px;color:#1b1b1b;letter-spacing:-0.629px;">2,256 KB</span>
<span class="t" style="left:568.1px;top:381.0px;font-size:17.5px;line-height:24px;color:#1b1b1b;letter-spacing:0.110px;">1000009456.zip</span>
<span class="t" style="left:1059.8px;top:381.0px;font-size:17.5px;line-height:24px;color:#5e5e5e;letter-spacing:0.033px;">5/8/2025 9:12 PM</span>
<span class="t" style="left:1270.6px;top:381.0px;font-size:17.5px;line-height:24px;color:#5e5e5e;letter-spacing:-0.083px;">Compressed (zipp...</span>
<span class="t" style="left:1480.3px;top:381.0px;font-size:17.5px;line-height:24px;color:#5e5e5e;letter-spacing:-0.557px;">4,304 KB</span>
<span class="t" style="left:568.1px;top:460.9px;font-size:17.5px;line-height:24px;color:#1b1b1b;letter-spacing:0.450px;">clubmed-rio-das-pedras</span>
<span class="t" style="left:1059.8px;top:460.9px;font-size:17.5px;line-height:24px;color:#5e5e5e;letter-spacing:0.047px;">5/7/2025 12:05 PM</span>
<span class="t" style="left:1270.6px;top:460.9px;font-size:17.5px;line-height:24px;color:#5e5e5e;letter-spacing:-0.173px;">Microsoft Excel Co...</span>
<span class="t" style="left:1504.5px;top:460.9px;font-size:17.5px;line-height:24px;color:#5e5e5e;letter-spacing:-0.947px;">26 KB</span>
<span class="t" style="left:568.1px;top:503.9px;font-size:17.5px;line-height:24px;color:#1b1b1b;letter-spacing:0.450px;">clubmed-rio-das-pedras</span>
<span class="t" style="left:1059.8px;top:503.9px;font-size:17.5px;line-height:24px;color:#5e5e5e;letter-spacing:0.047px;">5/7/2025 12:04 PM</span>
<span class="t" style="left:1270.6px;top:503.9px;font-size:17.5px;line-height:24px;color:#5e5e5e;letter-spacing:-0.173px;">Microsoft Excel Co...</span>
<span class="t" style="left:1504.5px;top:503.9px;font-size:17.5px;line-height:24px;color:#5e5e5e;letter-spacing:-0.947px;">37 KB</span>
<span class="t" style="left:568.1px;top:546.9px;font-size:17.5px;line-height:24px;color:#1b1b1b;letter-spacing:0.450px;">clubmed-rio-das-pedras</span>
<span class="t" style="left:1057.3px;top:546.9px;font-size:17.5px;line-height:24px;color:#5e5e5e;letter-spacing:0.463px;">5/7/2025 11:58 AM</span>
<span class="t" style="left:1270.6px;top:546.9px;font-size:17.5px;line-height:24px;color:#5e5e5e;letter-spacing:-0.173px;">Microsoft Excel Co...</span>
<span class="t" style="left:1504.5px;top:546.9px;font-size:17.5px;line-height:24px;color:#5e5e5e;letter-spacing:-0.947px;">36 KB</span>
<span class="t" style="left:568.1px;top:589.9px;font-size:17.5px;line-height:24px;color:#1b1b1b;letter-spacing:0.450px;">clubmed-rio-das-pedras</span>
<span class="t" style="left:1057.3px;top:589.9px;font-size:17.5px;line-height:24px;color:#5e5e5e;letter-spacing:0.463px;">5/7/2025 11:57 AM</span>
<span class="t" style="left:1270.6px;top:589.9px;font-size:17.5px;line-height:24px;color:#5e5e5e;letter-spacing:-0.173px;">Microsoft Excel Co...</span>
<span class="t" style="left:1504.5px;top:589.9px;font-size:17.5px;line-height:24px;color:#5e5e5e;letter-spacing:-0.947px;">30 KB</span>
<span class="t" style="left:568.1px;top:670.0px;font-size:17.5px;line-height:24px;color:#1b1b1b;letter-spacing:-0.235px;">TransactionHistory</span>
<span class="t" style="left:1058.2px;top:670.0px;font-size:17.5px;line-height:24px;color:#5e5e5e;letter-spacing:0.312px;">5/2/2025 10:46 AM</span>
<span class="t" style="left:1270.6px;top:670.0px;font-size:17.5px;line-height:24px;color:#5e5e5e;letter-spacing:-0.173px;">Microsoft Excel Co...</span>
<span class="t" style="left:1504.5px;top:670.0px;font-size:17.5px;line-height:24px;color:#5e5e5e;letter-spacing:-0.947px;">13 KB</span>
<span class="t" style="left:568.1px;top:713.0px;font-size:17.5px;line-height:24px;color:#1b1b1b;letter-spacing:-0.235px;">TransactionHistory</span>
<span class="t" style="left:1058.2px;top:713.0px;font-size:17.5px;line-height:24px;color:#5e5e5e;letter-spacing:0.312px;">5/2/2025 10:45 AM</span>
<span class="t" style="left:1270.6px;top:713.0px;font-size:17.5px;line-height:24px;color:#5e5e5e;letter-spacing:-0.173px;">Microsoft Excel Co...</span>
<span class="t" style="left:1514.2px;top:713.0px;font-size:17.5px;line-height:24px;color:#5e5e5e;letter-spacing:-1.251px;">2 KB</span>
<span class="t" style="left:568.1px;top:756.0px;font-size:17.5px;line-height:24px;color:#1b1b1b;letter-spacing:0.187px;">zywie-patient-list</span>
<span class="t" style="left:1060.2px;top:756.0px;font-size:17.5px;line-height:24px;color:#5e5e5e;letter-spacing:0.011px;">4/30/2025 3:53 PM</span>
<span class="t" style="left:1270.6px;top:756.0px;font-size:17.5px;line-height:24px;color:#5e5e5e;letter-spacing:-0.173px;">Microsoft Excel Co...</span>
<span class="t" style="left:1504.5px;top:756.0px;font-size:17.5px;line-height:24px;color:#5e5e5e;letter-spacing:-0.947px;">32 KB</span>
<div class="a" style="left:643px;top:400px;width:17.5px;height:401px;background:linear-gradient(to right,rgba(0,0,0,0),rgba(0,0,0,.02) 40%,rgba(0,0,0,.085));-webkit-mask-image:linear-gradient(to bottom,transparent,#000 85%);mask-image:linear-gradient(to bottom,transparent,#000 85%)"></div>
<div class="a" style="left:1101.5px;top:400px;width:13px;height:401px;background:linear-gradient(to left,rgba(0,0,0,0),rgba(0,0,0,.015) 40%,rgba(0,0,0,.06));-webkit-mask-image:linear-gradient(to bottom,transparent,#000 85%);mask-image:linear-gradient(to bottom,transparent,#000 85%)"></div>
<div class="a" style="left:660.2px;top:311px;width:441.6px;height:520px;box-sizing:border-box;background:#fafafa;border:1.6px solid #ebebeb;border-radius:10px"></div>
<div class="a" style="left:661.8px;top:381px;width:438.4px;height:1.6px;background:#ececec"></div>
<div class="a" style="left:670.5px;top:631.2px;width:423.3px;height:41.2px;background:#f0f0f0;border-radius:6px"></div>
<svg class="ov" width="1890" height="801" viewBox="0 0 1890 801"><path class="s" d="M690.75 336.2L702.25 352.59999999999997M703.3499999999999 336.2L691.8499999999999 352.59999999999997" stroke="#4d4d4d" stroke-width="1.5" fill="none" />
<circle cx="691.05" cy="355.5" r="3.5" fill="none" stroke="#0a7ad6" stroke-width="1.6"/>
<circle cx="703.05" cy="355.5" r="3.5" fill="none" stroke="#0a7ad6" stroke-width="1.6"/>
<path class="s" d="M754.6 343.2H751.2A3.6 3.6 0 0 0 747.6 346.8V354.4A3.6 3.6 0 0 0 751.2 358.0H756.2A3.6 3.6 0 0 0 759.6 354.8" stroke="#4d4d4d" stroke-width="1.5" fill="none" />
<rect x="754.6" y="337.8" width="12.2" height="15.6" rx="3.6" fill="none" stroke="#0a7ad6" stroke-width="1.6"/>
<path class="s" d="M818.3000000000001 339.29999999999995H809.9A4.4 4.4 0 0 0 805.5 343.69999999999993V352.1A4.4 4.4 0 0 0 809.9 356.5H818.3000000000001M823.5000000000001 339.29999999999995H824.5000000000001A4.4 4.4 0 0 1 828.9000000000001 343.69999999999993V352.1A4.4 4.4 0 0 1 824.5000000000001 356.5H823.5000000000001" stroke="#4d4d4d" stroke-width="1.6" fill="none" />
<path class="s" d="M820.9000000000001 336.5V359.29999999999995M817.7 336.29999999999995H824.1000000000001M817.7 359.5H824.1000000000001" stroke="#0a7ad6" stroke-width="1.6" fill="none" />
<path class="s" d="M809.2 351.7L813.4000000000001 343.29999999999995L817.6 351.7M810.7 348.9H816.1" stroke="#0a7ad6" stroke-width="1.5" fill="none" />
<path class="s" d="M875.7 339.5H870.5000000000001A3.6 3.6 0 0 0 866.9000000000001 343.1V354.29999999999995A3.6 3.6 0 0 0 870.5000000000001 357.9H881.9000000000001A3.6 3.6 0 0 0 885.5 354.29999999999995V353.29999999999995" stroke="#4d4d4d" stroke-width="1.6" fill="none" />
<path class="s" d="M881.1 337.9L888.3000000000001 344.7L881.1 351.29999999999995V347.5C876.2 347.29999999999995 873.3000000000001 348.9 871.3000000000001 351.5C871.9000000000001 345.5 875.7 341.9 881.1 341.5Z" stroke="#0a7ad6" stroke-width="1.5" fill="none" />
<path class="s" d="M926.4 339.7H947.6M933.8 339.49999999999994A3.2 3.2 0 0 1 940.2 339.49999999999994M928.8 339.9L930.6 356.9A2.6 2.6 0 0 0 933.2 359.29999999999995H940.8A2.6 2.6 0 0 0 943.4 356.9L945.2 339.9M934.6 345.49999999999994V353.7M939.4 345.49999999999994V353.7" stroke="#4d4d4d" stroke-width="1.6" fill="none" />
<defs>
<linearGradient id="of" x1="0" y1="0" x2="1" y2="1"><stop offset="0" stop-color="#ffd866"/><stop offset="1" stop-color="#f9bf2c"/></linearGradient>
<linearGradient id="ob" x1="0" y1="0" x2="0" y2="1"><stop offset="0" stop-color="#2b8fe6"/><stop offset="1" stop-color="#0e5fb8"/></linearGradient>
</defs>
<path d="M684.8 403A1.2 1.2 0 0 1 686 401.8H693.4L695.6 404.2V407H684.8Z" fill="#e6a717"/>
<path d="M684.8 405.8H693.8L695.9 404H708.1A1.2 1.2 0 0 1 709.3 405.2V421.9A1.2 1.2 0 0 1 708.1 423.1H686A1.2 1.2 0 0 1 684.8 421.9Z" fill="url(#of)"/>
<path d="M689 423.1V418.4A2.4 2.4 0 0 1 691.4 416H703.1A2.4 2.4 0 0 1 705.5 418.4V423.1Z" fill="url(#ob)"/>
<rect x="692.3" y="418.5" width="9.8" height="1.5" rx=".7" fill="#0b4a94"/>
<rect x="687.4" y="450.3" width="4.6" height="4.6" rx="1" fill="none" stroke="#4d4d4d" stroke-width="1.3"/>
<rect x="687.4" y="457.6" width="4.6" height="4.6" rx="1" fill="none" stroke="#4d4d4d" stroke-width="1.3"/>
<rect x="687.4" y="464.9" width="4.6" height="4.6" rx="1" fill="none" stroke="#4d4d4d" stroke-width="1.3"/>
<path class="s" d="M695.4 451.6H706.8" stroke="#4d4d4d" stroke-width="1.3" fill="none" />
<path class="s" d="M695.4 459.2H697.4" stroke="#4d4d4d" stroke-width="1.3" fill="none" />
<circle cx="702.1" cy="465" r="7.5" fill="#fafafa"/>
<circle cx="702.1" cy="465" r="6.8" fill="#0a7ad6"/>
<path class="s" d="M699.6 467.6L704.7 462.5M700.6 462.3H704.9V466.6" stroke="#fff" stroke-width="1.4" fill="none" />
<path class="s" d="M1067.2 454.5L1073 460.3L1067.2 466.1" stroke="#5a5a5a" stroke-width="1.3" fill="none" />
<rect x="687.3" y="501.3" width="17" height="16.2" rx="3.4" fill="none" stroke="#4d4d4d" stroke-width="1.4"/>
<rect x="689.9" y="498.7" width="17" height="16.2" rx="3.2" fill="#fafafa" stroke="#4d4d4d" stroke-width="1.5"/>
<path class="s" d="M694.6 510.6L703 502.2M697.6 502H703.2V507.6" stroke="#0a7ad6" stroke-width="1.5" fill="none" />
<path class="s" d="M696.4 548.6H690.6A3.4 3.4 0 0 0 687.2 552V561.6A3.4 3.4 0 0 0 690.6 565H702.2A3.4 3.4 0 0 0 705.6 561.6V557.4" stroke="#4d4d4d" stroke-width="1.5" fill="none" />
<path class="s" d="M695.6 557.2L706.4 546.4M699.6 546.2H706.6V553.2" stroke="#0a7ad6" stroke-width="1.5" fill="none" />
<path class="s" d="M696.0 595.8000000000001H690.8000000000001A3.6 3.6 0 0 0 687.2 599.4000000000001V610.6A3.6 3.6 0 0 0 690.8000000000001 614.2H702.2A3.6 3.6 0 0 0 705.8 610.6V609.6" stroke="#4d4d4d" stroke-width="1.6" fill="none" />
<path class="s" d="M701.4 594.2L708.6 601.0L701.4 607.6V603.8000000000001C696.5 603.6 693.6 605.2 691.6 607.8000000000001C692.2 601.8000000000001 696.0 598.2 701.4 597.8000000000001Z" stroke="#0a7ad6" stroke-width="1.5" fill="none" />
<path class="s" d="M694.6999999999999 661.5H688.0999999999999A2.4 2.4 0 0 1 685.6999999999999 659.1V644.5A2.4 2.4 0 0 1 688.0999999999999 642.1H693.6999999999999L696.6999999999999 645.3H704.3A2.4 2.4 0 0 1 706.6999999999999 647.6999999999999V649.9" stroke="#4d4d4d" stroke-width="1.5" fill="none" />
<path class="s" d="M687.9 661.3L689.9 650.3A2.2 2.2 0 0 1 692.0999999999999 648.5H705.9A2.0 2.0 0 0 1 707.9 650.9" stroke="#4d4d4d" stroke-width="1.5" fill="none" />
<circle cx="702.8" cy="657.5" r="7.4" fill="#f0f0f0"/>
<circle cx="702.8" cy="657.5" r="6.6" fill="#0a7ad6"/>
<path class="s" d="M699.3 657.5H705.9M703.3 654.6999999999999L706.0999999999999 657.5L703.3 660.3" stroke="#fff" stroke-width="1.4" fill="none" />
<path class="s" d="M685.2 711.6999999999999L692.6 704.6" stroke="#555" stroke-width="1.5" fill="none" />
<path class="s" d="M699.2 688.8L708.4 698.1999999999999C703 698.8 702 700.5 701 703.5C700.4 705.8 699.6 707.6 697.8 709.9L687.2 699.1999999999999C691 699.0 694 697.5 695.6 694.6C696.6 692.6 697.6 690.4 699.2 688.8Z" stroke="#0a7ad6" stroke-width="1.5" fill="none" />
<path class="s" d="M685.2 759.6999999999999L692.6 752.6" stroke="#555" stroke-width="1.5" fill="none" />
<path class="s" d="M699.2 736.8L708.4 746.1999999999999C703 746.8 702 748.5 701 751.5C700.4 753.8 699.6 755.6 697.8 757.9L687.2 747.1999999999999C691 747.0 694 745.5 695.6 742.6C696.6 740.6 697.6 738.4 699.2 736.8Z" stroke="#0a7ad6" stroke-width="1.5" fill="none" />
<path class="s" d="M697.1 785.5L700.3 792.5L707.9 793.4L702.3 798.6L703.8 806.1L697.1 802.4L690.4 806.1L691.9 798.6L686.3 793.4L693.9 792.5Z" stroke="#0a7ad6" stroke-width="1.5" fill="none" /></svg>
<span class="t" style="left:726.4px;top:399.4px;font-size:20.2px;line-height:28px;color:#1b1b1b;letter-spacing:0.203px;">Open</span>
<span class="t" style="left:726.4px;top:447.3px;font-size:20.2px;line-height:28px;color:#1b1b1b;letter-spacing:0.549px;">Open with</span>
<span class="t" style="left:726.4px;top:495.1px;font-size:20.2px;line-height:28px;color:#1b1b1b;letter-spacing:0.433px;">Open in new tab</span>
<span class="t" style="left:726.4px;top:543.2px;font-size:20.2px;line-height:28px;color:#1b1b1b;letter-spacing:0.554px;">Open in new window</span>
<span class="t" style="left:726.4px;top:591.2px;font-size:20.2px;line-height:28px;color:#1b1b1b;letter-spacing:-0.669px;">Share</span>
<span class="t" style="left:726.4px;top:639.2px;font-size:20.2px;line-height:28px;color:#1b1b1b;letter-spacing:-0.098px;">Extract All...</span>
<span class="t" style="left:726.4px;top:687.0px;font-size:20.2px;line-height:28px;color:#1b1b1b;letter-spacing:0.007px;">Pin to Quick access</span>
<span class="t" style="left:726.4px;top:735.0px;font-size:20.2px;line-height:28px;color:#1b1b1b;letter-spacing:0.230px;">Pin to Start</span>
<span class="t" style="left:726.4px;top:783.0px;font-size:20.2px;line-height:28px;color:#1b1b1b;letter-spacing:0.247px;">Add to Favorites</span>
<span class="t" style="left:978.8px;top:402.2px;font-size:17.3px;line-height:24px;color:#6b6b6b;letter-spacing:-0.328px;">Enter</span>
</body></html>
